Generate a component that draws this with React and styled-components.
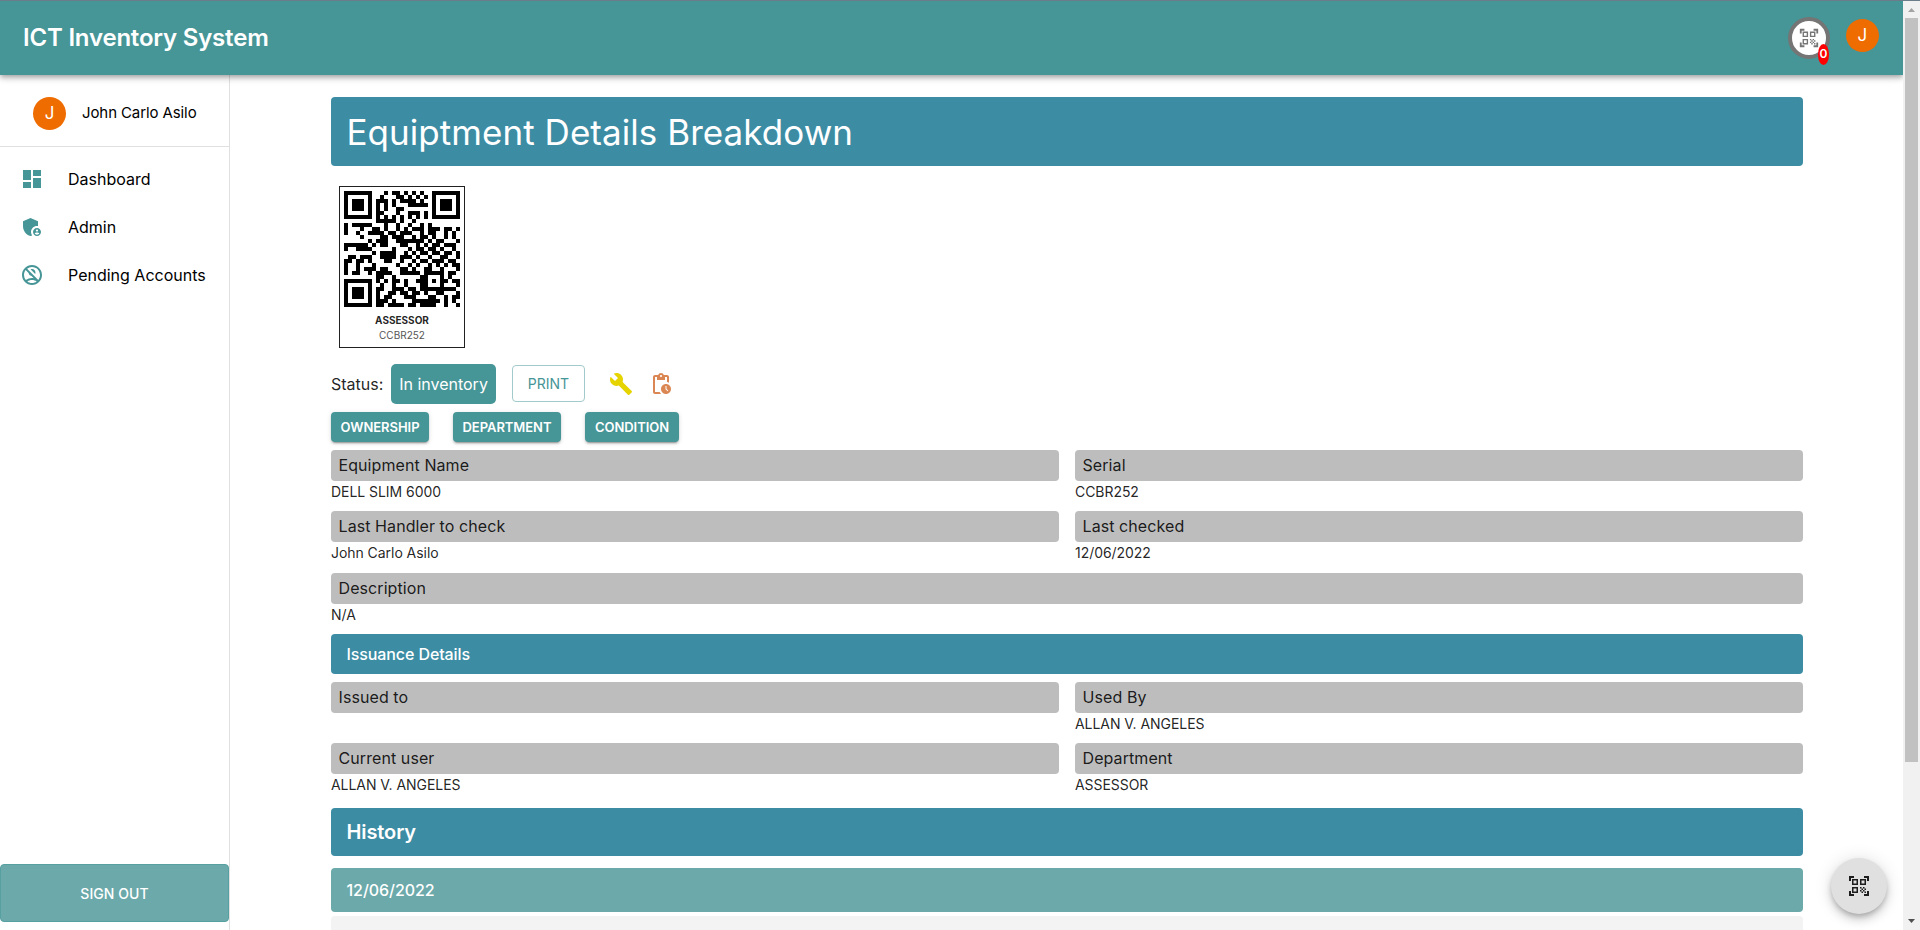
import React from "react";
import styled, { createGlobalStyle } from "styled-components";
import {
  MdDashboard,
  MdAdminPanelSettings,
  MdOutlineNoAccounts,
  MdQrCodeScanner,
  MdBuild,
  MdPendingActions,
} from "react-icons/md";

const teal = "#469597";
const blue = "#3c8ca4";

const GlobalStyle = createGlobalStyle`
  * { box-sizing: border-box; }
  body {
    margin: 0;
    overflow: hidden;
    background: #fff;
    color: rgba(0, 0, 0, 0.87);
    font-family: Inter, "Liberation Sans", sans-serif;
    font-size: 16px;
    letter-spacing: 0.08px;
  }
  button { font-family: inherit; margin: 0; padding: 0; border: 0; }
`;

const Window = styled.div`
  display: flex;
  flex-direction: column;
  height: 930px;
  width: 1920px;
  border-top: 1px solid #6b7d8a;
  overflow: hidden;
`;
const Viewport = styled.div`
  display: flex;
  flex: 1;
  min-height: 0;
`;
const Page = styled.div`
  position: relative;
  display: flex;
  flex-direction: column;
  width: 1903px;
  overflow: hidden;
`;
const Header = styled.header`
  display: flex;
  align-items: center;
  justify-content: space-between;
  flex: none;
  height: 74px;
  padding: 0 24px 0 23px;
  background: ${teal};
  color: #fff;
  z-index: 2;
  box-shadow: 0 2px 4px -1px rgba(0, 0, 0, 0.2), 0 4px 5px rgba(0, 0, 0, 0.14),
    0 1px 10px rgba(0, 0, 0, 0.12);
`;
const Brand = styled.h1`
  margin: 0;
  font-size: 24px;
  font-weight: 600;
  line-height: 32px;
  letter-spacing: -0.2px;
`;
const HeaderActions = styled.div`
  display: flex;
  align-items: center;
  gap: 16px;
`;
const ScanButton = styled.button`
  position: relative;
  display: flex;
  align-items: center;
  justify-content: center;
  width: 42px;
  height: 42px;
  border: 4px solid #757575;
  border-radius: 50%;
  background: #fff;
  color: #757575;
`;
const Badge = styled.span`
  position: absolute;
  right: -3px;
  bottom: -10px;
  width: 11px;
  height: 21px;
  border-radius: 50%;
  background: #f00;
  color: #fff;
  font-size: 12px;
  font-weight: 600;
  line-height: 20px;
  letter-spacing: 0;
  text-align: center;
`;
const Avatar = styled.span`
  display: flex;
  align-items: center;
  justify-content: center;
  width: 33px;
  height: 33px;
  flex: none;
  border-radius: 50%;
  background: #ef6c00;
  color: #fff;
  font-size: 17px;
  line-height: 1;
`;
const HeaderAvatar = styled(Avatar)`
  margin-bottom: 5px;
`;
const Body = styled.div`
  display: flex;
  flex: 1;
  min-height: 0;
`;
const Sidebar = styled.aside`
  display: flex;
  flex-direction: column;
  width: 230px;
  flex: none;
  padding-bottom: 8px;
  border-right: 1px solid #e0e0e0;
`;
const Profile = styled.div`
  display: flex;
  align-items: center;
  gap: 16px;
  height: 72px;
  padding: 5px 0 0 33px;
  margin-bottom: 8px;
  border-bottom: 1px solid #e0e0e0;
  color: #000;
  font-size: 15px;
  letter-spacing: -0.1px;
`;
const ProfileName = styled.span`
  padding-bottom: 2px;
`;
const NavItem = styled.a`
  display: flex;
  align-items: center;
  gap: 24px;
  height: 48px;
  padding-left: 20px;
  color: #000;
  letter-spacing: 0;
  svg { color: ${teal}; font-size: 24px; }
`;
const Nav = styled.nav`
  flex: 1;
`;
const SignOut = styled.button`
  height: 58px;
  border: 1px solid #57a0a1;
  border-radius: 4px;
  background: #6ba9aa;
  color: #fff;
  font-size: 14px;
  font-weight: 500;
  letter-spacing: 0.05px;
`;
const Main = styled.main`
  display: flex;
  flex-direction: column;
  width: 1472px;
  flex: none;
  margin: 22px 0 0 101px;
`;
const Banner = styled.h2`
  display: flex;
  align-items: center;
  flex: none;
  height: ${(p) => p.$height}px;
  margin: 0 0 ${(p) => p.$after}px;
  padding: 0 15.5px;
  border-radius: 4px;
  background: ${(p) => p.$color || blue};
  color: #fff;
  font-size: ${(p) => p.$size}px;
  font-weight: ${(p) => p.$weight || 400};
  letter-spacing: ${(p) => p.$spacing || 0}px;
`;
const Label = styled.div`
  display: flex;
  flex-direction: column;
  align-items: center;
  flex: none;
  align-self: flex-start;
  width: 126px;
  height: 162px;
  margin: 0 0 16px 8px;
  padding-top: 4px;
  border: 1px solid #212121;
  font-size: 10px;
  line-height: 15px;
  letter-spacing: 0;
  svg { display: block; margin-bottom: 6px; }
  span { color: #555; }
`;
const StatusRow = styled.div`
  display: flex;
  align-items: center;
  flex: none;
  height: 40px;
  margin-bottom: 8px;
`;
const StatusChip = styled.span`
  display: flex;
  align-items: center;
  justify-content: center;
  width: 105px;
  height: 40px;
  margin: 0 16px 0 8px;
  border-radius: 5px;
  background: ${teal};
  color: #fff;
  letter-spacing: 0;
`;
const StatusText = styled.span`
  width: 52px;
  letter-spacing: 0;
`;
const PrintButton = styled.button`
  width: 73px;
  height: 37px;
  margin: 0 24px 1px 0;
  padding-bottom: 1px;
  border: 1px solid #a2cacb;
  border-radius: 4px;
  background: #fff;
  color: ${teal};
  font-size: 14px;
  letter-spacing: 0;
`;
const IconSlot = styled.span`
  display: flex;
  width: 24px;
  margin-right: 16px;
  color: ${(p) => p.$color};
  font-size: 24px;
`;
const ButtonRow = styled.div`
  display: flex;
  flex: none;
  gap: 24px;
  margin-bottom: 8px;
`;
const SmallButton = styled.button`
  width: ${(p) => p.$width}px;
  height: 30px;
  border-radius: 4px;
  background: ${teal};
  color: #fff;
  font-size: 13px;
  font-weight: 600;
  letter-spacing: -0.05px;
  box-shadow: 0 3px 1px -2px rgba(0, 0, 0, 0.2), 0 2px 2px rgba(0, 0, 0, 0.14),
    0 1px 5px rgba(0, 0, 0, 0.12);
`;
const FieldGrid = styled.div`
  display: grid;
  flex: none;
  grid-template-columns: 1fr 1fr;
  grid-auto-rows: 61.3px;
  column-gap: 16px;
  margin-bottom: ${(p) => p.$after || 0}px;
`;
const Field = styled.div`
  grid-column: span ${(p) => p.$span || 1};
`;
const FieldName = styled.div`
  height: 31px;
  padding-left: 7.5px;
  border-radius: 4px;
  background: #bdbdbd;
  line-height: 31px;
`;
const FieldValue = styled.div`
  font-size: 14px;
  line-height: 22px;
  letter-spacing: -0.05px;
`;
const HistoryBody = styled.div`
  flex: none;
  height: 60px;
  border-radius: 4px;
  background: #f3f3f3;
`;
const Fab = styled.button`
  position: absolute;
  right: 16px;
  bottom: 16px;
  display: flex;
  align-items: center;
  justify-content: center;
  width: 56px;
  height: 56px;
  border-radius: 50%;
  background: #e0e0e0;
  color: rgba(0, 0, 0, 0.87);
  box-shadow: 0 3px 5px -1px rgba(0, 0, 0, 0.2), 0 6px 10px rgba(0, 0, 0, 0.14),
    0 1px 18px rgba(0, 0, 0, 0.12);
`;
const Scrollbar = styled.div`
  display: flex;
  flex-direction: column;
  align-items: center;
  justify-content: space-between;
  width: 17px;
  background: #f1f1f1;
`;
const Thumb = styled.div`
  width: 13px;
  height: 744px;
  margin-bottom: 151px;
  background: #c1c1c1;
`;
const Arrow = styled.svg`
  display: block;
  width: 17px;
  height: 17px;
  fill: ${(p) => p.$color};
`;

const qrRows = [
  "11111110001011010101001111111",
  "10000010010001101010101000001",
  "10111010111010111101001011101",
  "10111010101010001111101011101",
  "10111010101001100000001011101",
  "10000010110001001110101000001",
  "11111110101010101010101111111",
  "00000000111110100100000000000",
  "10111110001001001001010000000",
  "10001001101001010111011101101",
  "10010011110110111001011001010",
  "00001000011011100101101001010",
  "00000010111001111111010110001",
  "11111101011000110010101101110",
  "10011110000010001011011010010",
  "00000001011110010101101101101",
  "01101110011110111010010011001",
  "11011010001100100101101110110",
  "10010001000001001010010101011",
  "10010111011000110100110010001",
  "10110010111100111110111110110",
  "00000000110010000001100010100",
  "11111110101011010011101011011",
  "10000010010010010001100010001",
  "10111010110011101101111111110",
  "10111010100110110110100110001",
  "10111010101100011100011001011",
  "10000010111010000111111101010",
  "11111110110111101101111001001",
];

function QrCode() {
  const d = qrRows
    .map((row, y) =>
      [...row].map((cell, x) => (cell === "1" ? `M${x} ${y}h1v1h-1z` : "")).join("")
    )
    .join("");
  return (
    <svg width="116" height="116" viewBox="0 0 29 29" shapeRendering="crispEdges">
      <path d={d} />
    </svg>
  );
}

const navItems = [
  ["Dashboard", MdDashboard],
  ["Admin", MdAdminPanelSettings],
  ["Pending Accounts", MdOutlineNoAccounts],
];
const equipmentFields = [
  ["Equipment Name", "DELL SLIM 6000"],
  ["Serial", "CCBR252"],
  ["Last Handler to check", "John Carlo Asilo"],
  ["Last checked", "12/06/2022"],
  ["Description", "N/A", 2],
];
const issuanceFields = [
  ["Issued to", ""],
  ["Used By", "ALLAN V. ANGELES"],
  ["Current user", "ALLAN V. ANGELES"],
  ["Department", "ASSESSOR"],
];

function Fields({ items, after }) {
  return (
    <FieldGrid $after={after}>
      {items.map(([name, value, span]) => (
        <Field key={name} $span={span}>
          <FieldName>{name}</FieldName>
          <FieldValue>{value}</FieldValue>
        </Field>
      ))}
    </FieldGrid>
  );
}

export default function App() {
  return (
    <Window>
      <GlobalStyle />
      <Viewport>
        <Page>
          <Header>
            <Brand>ICT Inventory System</Brand>
            <HeaderActions>
              <ScanButton>
                <MdQrCodeScanner size={22} />
                <Badge>0</Badge>
              </ScanButton>
              <HeaderAvatar>J</HeaderAvatar>
            </HeaderActions>
          </Header>
          <Body>
            <Sidebar>
              <Profile>
                <Avatar>J</Avatar>
                <ProfileName>John Carlo Asilo</ProfileName>
              </Profile>
              <Nav>
                {navItems.map(([name, Icon]) => (
                  <NavItem key={name}>
                    <Icon />
                    {name}
                  </NavItem>
                ))}
              </Nav>
              <SignOut>SIGN OUT</SignOut>
            </Sidebar>
            <Main>
              <Banner $height={69} $after={20} $size={35} $spacing={0.05}>
                Equiptment Details Breakdown
              </Banner>
              <Label>
                <QrCode />
                <b>ASSESSOR</b>
                <span>CCBR252</span>
              </Label>
              <StatusRow>
                <StatusText>Status:</StatusText>
                <StatusChip>In inventory</StatusChip>
                <PrintButton>PRINT</PrintButton>
                <IconSlot $color="#e6d400">
                  <MdBuild />
                </IconSlot>
                <IconSlot $color="#db8753">
                  <MdPendingActions />
                </IconSlot>
              </StatusRow>
              <ButtonRow>
                <SmallButton $width={98}>OWNERSHIP</SmallButton>
                <SmallButton $width={108}>DEPARTMENT</SmallButton>
                <SmallButton $width={94}>CONDITION</SmallButton>
              </ButtonRow>
              <Fields items={equipmentFields} />
              <Banner $height={40} $after={8} $size={16} $weight={500} $spacing={-0.1}>
                Issuance Details
              </Banner>
              <Fields items={issuanceFields} after={3.5} />
              <Banner $height={48} $after={12} $size={20} $weight={600} $spacing={-0.1}>
                History
              </Banner>
              <Banner $height={44} $after={4} $size={16} $weight={500} $spacing={-0.05} $color="#6ba9aa">
                12/06/2022
              </Banner>
              <HistoryBody />
            </Main>
          </Body>
          <Fab>
            <MdQrCodeScanner size={24} />
          </Fab>
        </Page>
        <Scrollbar>
          <Arrow $color="#a3a3a3" viewBox="0 0 17 17">
            <path d="M5 11h7L8.500 7z" />
          </Arrow>
          <Thumb />
          <Arrow $color="#505050" viewBox="0 0 17 17">
            <path d="M5 6h7L8.500 10z" />
          </Arrow>
        </Scrollbar>
      </Viewport>
    </Window>
  );
}
